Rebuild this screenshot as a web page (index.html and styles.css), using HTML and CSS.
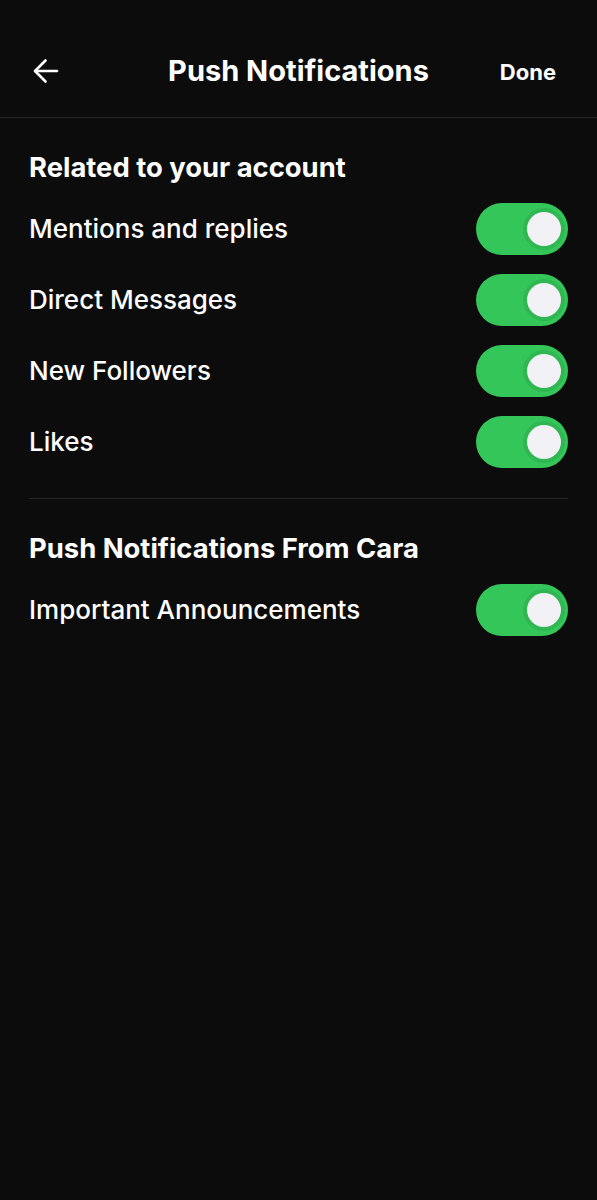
FILE: index.html
```html
<!DOCTYPE html>
<html lang="en">
<head>
    <meta charset="UTF-8">
    <meta name="viewport" content="width=device-width, initial-scale=1.0">
    <title>Push Notifications</title>
    <link rel="stylesheet" href="styles.css">
</head>
<body>
    <header class="topbar">
        <button class="back" aria-label="Back">
            <svg width="26" height="26" viewBox="0 0 26 26" fill="none" stroke="#fff" stroke-width="2.6" stroke-linecap="round" stroke-linejoin="round">
                <path d="M24 13H2.5"/>
                <path d="M12.5 2.5L2 13l10.5 10.5"/>
            </svg>
        </button>
        <h1 class="title">Push Notifications</h1>
        <button class="done">Done</button>
    </header>

    <section class="group">
        <h2 class="group-title">Related to your account</h2>
        <div class="row">
            <span>Mentions and replies</span>
            <span class="toggle on"><span class="knob"></span></span>
        </div>
        <div class="row">
            <span>Direct Messages</span>
            <span class="toggle on"><span class="knob"></span></span>
        </div>
        <div class="row">
            <span>New Followers</span>
            <span class="toggle on"><span class="knob"></span></span>
        </div>
        <div class="row">
            <span>Likes</span>
            <span class="toggle on"><span class="knob"></span></span>
        </div>
    </section>

    <section class="group last">
        <h2 class="group-title">Push Notifications From Cara</h2>
        <div class="row">
            <span>Important Announcements</span>
            <span class="toggle on"><span class="knob"></span></span>
        </div>
    </section>
</body>
</html>
```

FILE: styles.css
```css
body {
    background-color: #0c0c0c;
    margin: 0;
    font-family: Inter, "Noto Sans", sans-serif;
    color: #fff;
    min-height: 1200px;
}
.topbar {
    height: 93px;
    display: flex;
    align-items: center;
    justify-content: space-between;
    padding: 24px 41px 0 33px;
    border-bottom: 1px solid #262626;
    position: relative;
}
.back, .done {
    background: none;
    border: none;
    padding: 0;
    color: #fff;
    font-family: inherit;
    cursor: pointer;
}
.back {
    display: flex;
}
.done {
    font-size: 22px;
    font-weight: 700;
    margin-top: 3px;
}
.title {
    position: absolute;
    left: 0;
    right: 0;
    top: 24px;
    bottom: 0;
    display: flex;
    align-items: center;
    justify-content: center;
    margin: 0;
    font-size: 29px;
    font-weight: 700;
    pointer-events: none;
}
.group {
    margin: 0 29px;
    padding: 33px 0 21px;
    border-bottom: 1px solid #262626;
}
.group.last {
    border-bottom: none;
}
.group-title {
    margin: 0 0 10px;
    font-size: 27.4px;
    font-weight: 700;
    line-height: 32px;
}
.row {
    height: 71px;
    display: flex;
    align-items: center;
    justify-content: space-between;
    font-size: 26px;
    font-weight: 500;
}
.toggle {
    width: 92px;
    height: 52px;
    border-radius: 26px;
    background-color: #34c659;
    display: flex;
    align-items: center;
    justify-content: flex-end;
    padding-right: 7px;
    box-sizing: border-box;
}
.knob {
    width: 34px;
    height: 34px;
    border-radius: 50%;
    background-color: #f2f2f6;
    box-shadow: 0 0 0 4px #2fb752;
}
```
